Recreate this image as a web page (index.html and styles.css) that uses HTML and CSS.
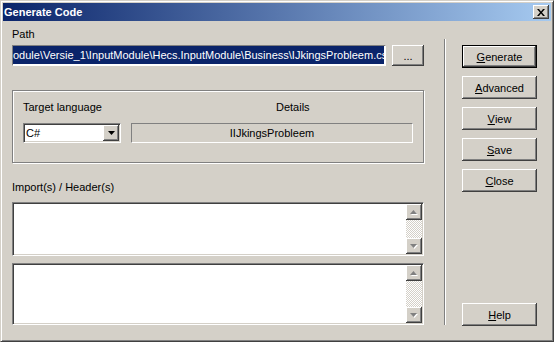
FILE: index.html
```html
<!DOCTYPE html>
<html lang="nl">
<head>
    <meta charset="UTF-8">
    <title>Generate Code</title>
    <link rel="stylesheet" href="styles.css">
</head>
<body>

<div class="window">
    <div class="titlebar">
        <span class="title">Generate Code</span>
        <button class="btn close-btn" aria-label="Close">
            <svg width="8" height="7" viewBox="0 0 8 7">
                <path d="M0 0h2l2 2.5 2-2.5h2l-3 3.5 3 3.5h-2l-2-2.5-2 2.5h-2l3-3.5z" fill="#000"/>
            </svg>
        </button>
    </div>

    <div class="client">
        <div class="main">
            <label class="lbl" for="pad">Path</label>
            <div class="path-row">
                <div class="path-input" id="pad">
                    <span class="sel">odule\Versie_1\InputModule\Hecs.InputModule\Business\IJkingsProbleem.cs</span>
                </div>
                <button class="btn browse">...</button>
            </div>

            <div class="group">
                <span class="lbl">Target language</span>
                <span class="lbl details-lbl">Details</span>
                <div class="combo">
                    <span class="combo-text">C#</span>
                    <span class="btn combo-arrow">
                        <svg width="7" height="4" viewBox="0 0 7 4"><path d="M0 0h7l-3.5 4z" fill="#000"/></svg>
                    </span>
                </div>
                <div class="details">IIJkingsProbleem</div>
            </div>

            <label class="lbl import-lbl">Import(s) / Header(s)</label>
            <div class="memo memo-top">
                <div class="scrollbar">
                    <span class="btn sb-btn">
                        <svg width="8" height="5" viewBox="0 0 8 5"><path d="M1 5h7l-3.5-4z" fill="#fff"/><path d="M0 4h7l-3.5-4z" fill="#808080"/></svg>
                    </span>
                    <span class="track"></span>
                    <span class="btn sb-btn">
                        <svg width="8" height="5" viewBox="0 0 8 5"><path d="M1 1h7l-3.5 4z" fill="#fff"/><path d="M0 0h7l-3.5 4z" fill="#808080"/></svg>
                    </span>
                </div>
            </div>
            <div class="memo memo-bottom">
                <div class="scrollbar">
                    <span class="btn sb-btn">
                        <svg width="8" height="5" viewBox="0 0 8 5"><path d="M1 5h7l-3.5-4z" fill="#fff"/><path d="M0 4h7l-3.5-4z" fill="#808080"/></svg>
                    </span>
                    <span class="track"></span>
                    <span class="btn sb-btn">
                        <svg width="8" height="5" viewBox="0 0 8 5"><path d="M1 1h7l-3.5 4z" fill="#fff"/><path d="M0 0h7l-3.5 4z" fill="#808080"/></svg>
                    </span>
                </div>
            </div>
        </div>

        <div class="separator"></div>

        <div class="actions">
            <button class="btn default"><u>G</u>enerate</button>
            <button class="btn"><u>A</u>dvanced</button>
            <button class="btn"><u>V</u>iew</button>
            <button class="btn"><u>S</u>ave</button>
            <button class="btn"><u>C</u>lose</button>
            <button class="btn help"><u>H</u>elp</button>
        </div>
    </div>
</div>

</body>
</html>
```

FILE: styles.css
```css
body {
    margin: 0;
    font-family: "Liberation Sans", Arial, sans-serif;
    font-size: 11px;
    color: #000;
    background-color: #d4d0c8;
}
.window {
    width: 554px;
    height: 342px;
    box-sizing: border-box;
    border: 1px solid;
    border-color: #d4d0c8 #404040 #404040 #d4d0c8;
    box-shadow: inset 1px 1px #fff, inset -1px -1px #808080;
    padding: 2px;
    display: flex;
    flex-direction: column;
}
.titlebar {
    height: 18px;
    display: flex;
    align-items: center;
    justify-content: space-between;
    padding: 0 2px 0 1px;
    background: linear-gradient(to right, #0a246a, #a6caf0);
    color: #fff;
    font-weight: bold;
}
.btn {
    box-sizing: border-box;
    border: none;
    padding: 0;
    margin: 0;
    font: inherit;
    color: #000;
    background-color: #d4d0c8;
    box-shadow: inset -1px -1px #404040, inset 1px 1px #fff, inset -2px -2px #808080;
    display: flex;
    align-items: center;
    justify-content: center;
}
.close-btn {
    width: 16px;
    height: 14px;
}
.client {
    flex: 1;
    display: flex;
}
.main {
    margin-left: 9px;
    width: 412px;
    padding-top: 7px;
    display: flex;
    flex-direction: column;
}
.lbl {
    display: block;
    line-height: 13px;
}
.path-row {
    display: flex;
    gap: 6px;
    margin-top: 4px;
    height: 21px;
}
.path-input {
    flex: 1;
    box-sizing: border-box;
    border: 1px solid;
    border-color: #808080 #fff #fff #808080;
    padding: 0 1px 1px 0;
    background-color: #fff;
    overflow: hidden;
    white-space: nowrap;
}
.sel {
    display: block;
    height: 18px;
    line-height: 18px;
    background-color: #0a246a;
    color: #fff;
}
.browse {
    width: 32px;
}
.group {
    margin-top: 24px;
    height: 73px;
    box-sizing: border-box;
    border: 1px solid #808080;
    box-shadow: inset 1px 1px #fff, 1px 1px #fff;
    padding: 10px 10px 0;
    display: grid;
    grid-template-columns: 98px 282px;
    grid-template-rows: 13px 20px;
    column-gap: 10px;
    row-gap: 9px;
}
.details-lbl {
    padding-left: 145px;
}
.combo {
    box-sizing: border-box;
    border: 1px solid;
    border-color: #808080 #fff #fff #808080;
    box-shadow: inset 1px 1px #404040, inset -1px -1px #d4d0c8;
    padding: 1px;
    background-color: #fff;
    display: flex;
}
.combo-text {
    flex: 1;
    padding-left: 1px;
    line-height: 16px;
}
.combo-arrow {
    width: 16px;
    height: 16px;
}
.details {
    box-sizing: border-box;
    border: 1px solid;
    border-color: #808080 #fff #fff #808080;
    text-align: center;
    line-height: 18px;
}
.import-lbl {
    margin-top: 18px;
}
.memo {
    box-sizing: border-box;
    border: 1px solid;
    border-color: #808080 #fff #fff #808080;
    box-shadow: inset 1px 1px #404040, inset -1px -1px #d4d0c8;
    padding: 1px;
    background-color: #fff;
    display: flex;
    justify-content: flex-end;
}
.memo-top {
    margin-top: 8px;
    height: 54px;
}
.memo-bottom {
    margin-top: 7px;
    height: 62px;
}
.scrollbar {
    width: 16px;
    display: flex;
    flex-direction: column;
}
.sb-btn {
    height: 16px;
    flex: none;
}
.track {
    flex: 1;
    background: repeating-conic-gradient(#fff 0 25%, #d4d0c8 0 50%) 0 0 / 2px 2px;
}
.separator {
    width: 0;
    border-left: 1px solid #808080;
    border-right: 1px solid #fff;
    margin: 18px 0 14px 20px;
}
.actions {
    margin-left: 16px;
    width: 75px;
    padding: 24px 0 13px;
    display: flex;
    flex-direction: column;
    gap: 8px;
}
.actions .btn {
    height: 23px;
    flex: none;
}
.actions .default {
    border: 1px solid #000;
}
.actions .help {
    margin-top: auto;
}
```
